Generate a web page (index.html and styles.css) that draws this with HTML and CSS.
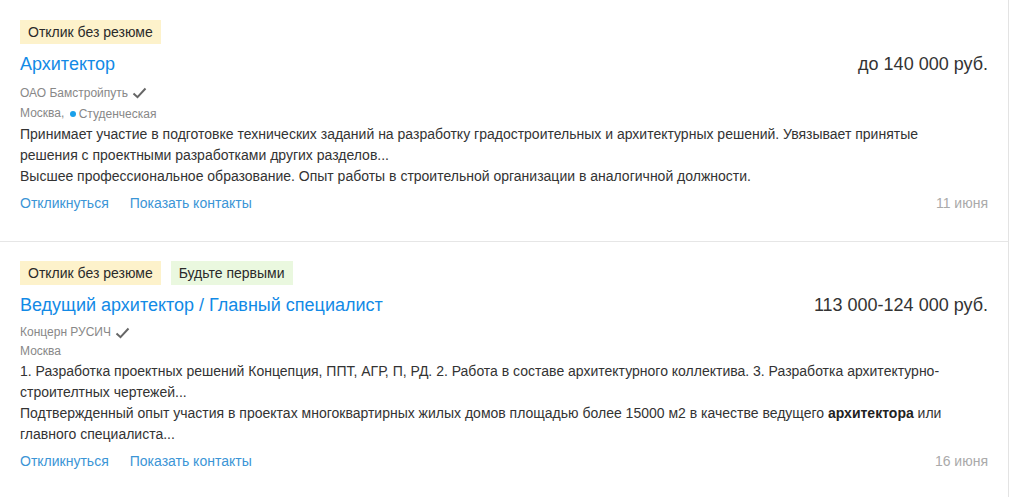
FILE: index.html
```html
<!DOCTYPE html>
<html lang="ru">
<head>
<meta charset="utf-8">
<link rel="stylesheet" href="styles.css">
</head>
<body>
<div class="list">
  <div class="card">
    <div class="badges">
      <span class="badge badge-yellow">Отклик без резюме</span>
    </div>
    <div class="head">
      <a class="title">Архитектор</a>
      <span class="salary">до 140 000 руб.</span>
    </div>
    <div class="meta">
      <div class="company">ОАО Бамстройпуть <svg class="check" width="15" height="12" viewBox="0 0 15 12"><path d="M1.5 6.5 L5.5 10.2 L13.5 1.5" fill="none" stroke="#666" stroke-width="2"/></svg></div>
      <div class="city">Москва, <span class="metro"><span class="dot"></span>Студенческая</span></div>
    </div>
    <div class="desc">
      <p>Принимает участие в подготовке технических заданий на разработку градостроительных и архитектурных решений. Увязывает принятые решения с проектными разработками других разделов...</p>
      <p>Высшее профессиональное образование. Опыт работы в строительной организации в аналогичной должности.</p>
    </div>
    <div class="foot">
      <div class="actions">
        <a class="action">Откликнуться</a>
        <a class="action">Показать контакты</a>
      </div>
      <span class="date">11 июня</span>
    </div>
  </div>
  <div class="card">
    <div class="badges">
      <span class="badge badge-yellow">Отклик без резюме</span>
      <span class="badge badge-green">Будьте первыми</span>
    </div>
    <div class="head">
      <a class="title">Ведущий архитектор / Главный специалист</a>
      <span class="salary">113 000-124 000 руб.</span>
    </div>
    <div class="meta">
      <div class="company">Концерн РУСИЧ <svg class="check" width="15" height="12" viewBox="0 0 15 12"><path d="M1.5 6.5 L5.5 10.2 L13.5 1.5" fill="none" stroke="#666" stroke-width="2"/></svg></div>
      <div class="city">Москва</div>
    </div>
    <div class="desc">
      <p>1. Разработка проектных решений Концепция, ППТ, АГР, П, РД. 2. Работа в составе архитектурного коллектива. 3. Разработка архитектурно-строителтных чертежей...</p>
      <p>Подтвержденный опыт участия в проектах многоквартирных жилых домов площадью более 15000 м2 в качестве ведущего <b>архитектора</b> или главного специалиста...</p>
    </div>
    <div class="foot">
      <div class="actions">
        <a class="action">Откликнуться</a>
        <a class="action">Показать контакты</a>
      </div>
      <span class="date">16 июня</span>
    </div>
  </div>
</div>
</body>
</html>
```
FILE: styles.css
```css
html, body {
  margin: 0;
  padding: 0;
  background: #fff;
}
body {
  font-family: "Liberation Sans", Arial, sans-serif;
  color: #333;
}
.list {
  width: 1009px;
  border-right: 1px solid #e3e3e3;
  min-height: 497px;
  box-sizing: border-box;
}
.card {
  padding: 20px 20px 28px 20px;
  border-bottom: 1px solid #e6e6e6;
}
.card + .card {
  padding-top: 19px;
}
.badges {
  display: flex;
  gap: 10px;
  height: 24px;
}
.badge {
  display: inline-block;
  height: 24px;
  line-height: 24px;
  padding: 0 8px;
  font-size: 14px;
  color: #2a2a2a;
}
.badge-yellow {
  background: #fdf2cb;
}
.badge-green {
  background: #eaf8df;
}
.head {
  display: flex;
  justify-content: space-between;
  align-items: baseline;
  margin-top: 6px;
  line-height: 28px;
}
.title {
  font-size: 18px;
  color: #128ae6;
}
.salary {
  font-size: 18px;
  color: #333;
}
.meta {
  margin-top: 5px;
  font-size: 12px;
  line-height: 20px;
  color: #888;
}
.card + .card .meta {
  margin-top: 4px;
  line-height: 19px;
}
.company {
  display: flex;
  align-items: center;
  gap: 4px;
}
.check {
  display: block;
}
.metro {
  display: inline-flex;
  align-items: center;
}
.dot {
  width: 6px;
  height: 6px;
  border-radius: 50%;
  background: #1aa0ea;
  margin: 0 3px 0 2px;
}
.desc {
  max-width: 940px;
  font-size: 14px;
  line-height: 21px;
  color: #333;
}
.desc p {
  margin: 0;
}
.desc b {
  color: #222;
}
.foot {
  display: flex;
  justify-content: space-between;
  align-items: center;
  margin-top: 6px;
  line-height: 20px;
  font-size: 14px;
}
.actions {
  display: flex;
  gap: 21px;
}
.action {
  color: #3b95d6;
}
.date {
  color: #aaa;
}
```
